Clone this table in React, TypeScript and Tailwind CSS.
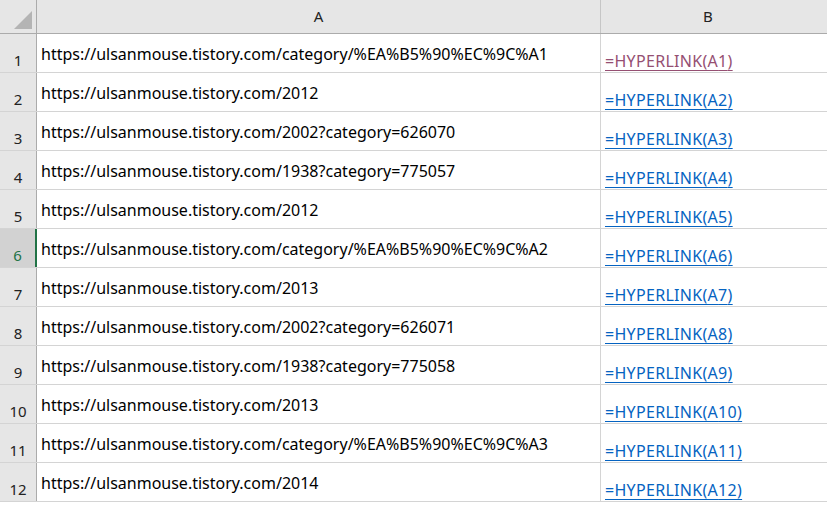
const urls = [
  "https://ulsanmouse.tistory.com/category/%EA%B5%90%EC%9C%A1",
  "https://ulsanmouse.tistory.com/2012",
  "https://ulsanmouse.tistory.com/2002?category=626070",
  "https://ulsanmouse.tistory.com/1938?category=775057",
  "https://ulsanmouse.tistory.com/2012",
  "https://ulsanmouse.tistory.com/category/%EA%B5%90%EC%9C%A2",
  "https://ulsanmouse.tistory.com/2013",
  "https://ulsanmouse.tistory.com/2002?category=626071",
  "https://ulsanmouse.tistory.com/1938?category=775058",
  "https://ulsanmouse.tistory.com/2013",
  "https://ulsanmouse.tistory.com/category/%EA%B5%90%EC%9C%A3",
  "https://ulsanmouse.tistory.com/2014",
];

export default function App() {
  return (
    <div
      className="w-[827px] h-[507px] overflow-hidden bg-white text-[16px]"
      style={{ fontFamily: '"Noto Sans", "Open Sans", sans-serif' }}
    >
      {/* column header */}
      <div className="flex h-[34px] bg-[#e6e6e6] border-b border-[#ababab]">
        <div className="w-[37px] shrink-0 border-r border-[#ababab] flex items-end justify-end pr-[4px] pb-[4px]">
          <svg width="18" height="18" viewBox="0 0 18 18">
            <polygon points="18,0 18,18 0,18" fill="#b4b4b4" />
          </svg>
        </div>
        <div className="w-[564px] shrink-0 border-r border-[#c6c6c6] flex items-center justify-center text-[#222] text-[15px]">
          A
        </div>
        <div className="flex-1 flex items-center justify-center text-[#222] text-[15px] pr-[12px]">B</div>
      </div>

      {urls.map((u, i) => {
        const sel = i === 5;
        return (
          <div key={i} className="flex h-[39px] border-b border-[#d4d4d4]">
            <div
              className={`w-[37px] shrink-0 flex items-end justify-center pb-[1px] text-[15px] ${
                sel ? "bg-[#d2d2d2] text-[#217346] border-r-2 border-[#217346]" : "bg-[#e6e6e6] text-[#222] border-r border-[#ababab]"
              }`}
            >
              {i + 1}
            </div>
            <div className="w-[564px] shrink-0 border-r border-[#d4d4d4] pl-[4px] pt-[8px] text-black whitespace-nowrap overflow-hidden">
              {u}
            </div>
            <div className="flex-1 flex items-end pl-[4px] -mb-[1px]">
              <span
                className={`underline underline-offset-[3px] tracking-[0.3px] ${
                  i === 0 ? "text-[#954f72]" : "text-[#0563c1]"
                }`}
              >
                =HYPERLINK(A{i + 1})
              </span>
            </div>
          </div>
        );
      })}
    </div>
  );
}
